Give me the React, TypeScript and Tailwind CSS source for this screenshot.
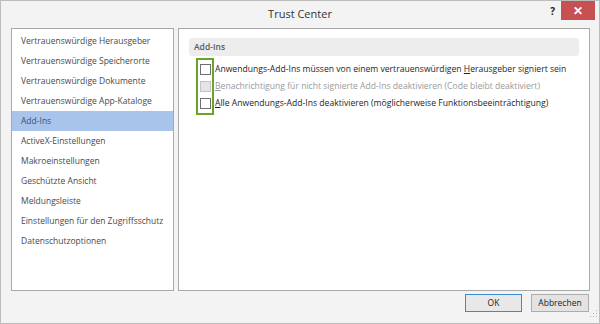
import React from "react";

const categories = [
  "Vertrauenswürdige Herausgeber",
  "Vertrauenswürdige Speicherorte",
  "Vertrauenswürdige Dokumente",
  "Vertrauenswürdige App-Kataloge",
  "Add-Ins",
  "ActiveX-Einstellungen",
  "Makroeinstellungen",
  "Geschützte Ansicht",
  "Meldungsleiste",
  "Einstellungen für den Zugriffsschutz",
  "Datenschutzoptionen",
];

function CheckRow({ disabled, children }: { disabled?: boolean; children: React.ReactNode }) {
  return (
    <div className="flex h-[17px] items-center">
      <div className="flex w-[19px] justify-center">
        <span
          className={
            disabled
              ? "block h-[11px] w-[11px] border border-[#c4c4c4] bg-[#e4e4e4]"
              : "block h-[11px] w-[11px] border border-[#6f6f6f] bg-white"
          }
        />
      </div>
      <span className={disabled ? "text-[#9a9a9a]" : "text-[#1e1e1e]"}>{children}</span>
    </div>
  );
}

export default function App() {
  return (
    <div className="flex h-[324px] w-[600px] flex-col border border-[#bdbdbd] bg-[#f3f3f3] font-['Open_Sans',sans-serif] text-[8.5px] leading-none">
      {/* Title bar */}
      <div className="relative flex h-[27px] items-start justify-center">
        <span className="mt-[7px] text-[11px] text-[#333]">Trust Center</span>
        <div className="absolute right-[4px] top-0 flex items-start">
          <span className="mr-[6px] mt-[5px] text-[10px] font-bold text-[#222]">?</span>
          <div className="flex h-[19px] w-[34px] items-center justify-center bg-[#c75050] text-[12px] font-bold text-white">
            ✕
          </div>
        </div>
      </div>

      {/* Panels */}
      <div className="flex gap-[4px] pl-[10px] pr-[9px]">
        <div className="h-[263px] w-[163px] border border-[#a9a9a9] bg-white pt-[2px]">
          {categories.map((c) => (
            <div
              key={c}
              className={
                c === "Add-Ins"
                  ? "flex h-[20px] items-center bg-[#a8c4ea] pl-[9px] text-[#3d4f78]"
                  : "flex h-[20px] items-center pl-[9px] text-[#4a4a4a]"
              }
            >
              {c}
            </div>
          ))}
        </div>

        <div className="h-[263px] flex-1 border border-[#a9a9a9] bg-white px-[10px] pt-[9px]">
          <div className="flex h-[18px] items-center rounded-[3px] bg-[#ededed] pl-[5px] font-semibold text-[#5a5a5a]">
            Add-Ins
          </div>
          <div className="relative ml-[7px] mt-[5px] text-[8.6px]">
            <CheckRow>
              Anwendungs-Add-Ins müssen von einem vertrauenswürdigen <u>H</u>erausgeber signiert sein
            </CheckRow>
            <CheckRow disabled>
              <u>B</u>enachrichtigung für nicht signierte Add-Ins deaktivieren (Code bleibt deaktiviert)
            </CheckRow>
            <CheckRow>
              <u>A</u>lle Anwendungs-Add-Ins deaktivieren (möglicherweise Funktionsbeeinträchtigung)
            </CheckRow>
            <div className="absolute -bottom-[3px] -top-[3px] left-0 w-[18px] border-2 border-[#6aa427]" />
          </div>
        </div>
      </div>

      {/* Footer */}
      <div className="relative flex justify-end gap-[9px] pr-[10px] pt-[3px]">
        <button className="flex h-[18px] w-[57px] items-center justify-center border border-[#3c8ad0] bg-[#e8e8e8] text-[#222]">
          OK
        </button>
        <button className="flex h-[18px] w-[58px] items-center justify-center border border-[#acacac] bg-[#e3e3e3] text-[#222]">
          Abbrechen
        </button>
        <svg className="absolute bottom-[-6px] right-[1px]" width="8" height="8" viewBox="0 0 8 8">
          <g fill="#b5b5b5">
            <rect x="6" y="0" width="1" height="1" />
            <rect x="3" y="3" width="1" height="1" />
            <rect x="6" y="3" width="1" height="1" />
            <rect x="0" y="6" width="1" height="1" />
            <rect x="3" y="6" width="1" height="1" />
            <rect x="6" y="6" width="1" height="1" />
          </g>
        </svg>
      </div>
    </div>
  );
}
